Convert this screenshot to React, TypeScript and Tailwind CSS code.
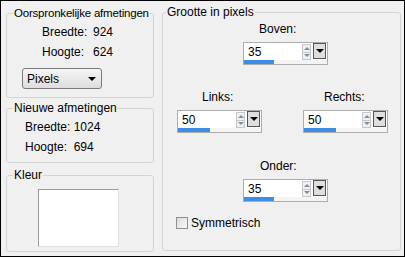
import React from "react";

const font = { fontFamily: '"Liberation Sans", Arial, sans-serif' };

function Spin({ value, fill }: { value: string; fill: number }) {
  return (
    <div className="w-[85px] h-[23px] border border-[#adadad] bg-white flex flex-col">
      <div className="flex h-[18px] items-start">
        <div className="flex-1 pl-[4px] pt-[2px] text-[12px] leading-[14px] text-black">{value}</div>
        <div className="w-[9px] h-[16px] mt-[1px] flex flex-col border border-[#c8c8c8] bg-[#f0f0f0]">
          <div className="flex-1 flex items-center justify-center">
            <div className="w-0 h-0 border-l-[3px] border-r-[3px] border-b-[3px] border-l-transparent border-r-transparent border-b-[#7d8fa3]" />
          </div>
          <div className="h-px bg-[#c8c8c8]" />
          <div className="flex-1 flex items-center justify-center">
            <div className="w-0 h-0 border-l-[3px] border-r-[3px] border-t-[3px] border-l-transparent border-r-transparent border-t-[#7d8fa3]" />
          </div>
        </div>
        <div className="w-[13px] h-[16px] ml-[2px] mr-[1px] border border-[#555] bg-[#dedede] flex items-center justify-center">
          <div className="w-0 h-0 border-l-[4px] border-r-[4px] border-t-[4px] border-l-transparent border-r-transparent border-t-black" />
        </div>
      </div>
      <div className="h-[4px] mt-auto bg-[#f4f4f4]">
        <div className="h-full bg-[#3b8ee3]" style={{ width: fill }} />
      </div>
    </div>
  );
}

export default function App() {
  return (
    <div
      className="w-[405px] h-[257px] border border-black bg-[#f0f0f0] flex pt-[4px] pl-[5px] text-[12px] leading-[14px] text-black"
      style={font}
    >
      {/* Left column */}
      <div className="w-[148px] flex flex-col">
        <fieldset className="h-[92px] mt-[1px] border border-[#d4d4d4] rounded-[3px]">
          <legend className="ml-[6px] px-[1px] whitespace-nowrap text-[11.5px] tracking-[-0.2px]">Oorspronkelijke afmetingen</legend>
          <div className="grid grid-cols-[51px_auto] ml-[35px] mt-[5px] gap-y-[6px]">
            <span>Breedte:</span>
            <span>924</span>
            <span>Hoogte:</span>
            <span>624</span>
          </div>
          <div className="ml-[15px] mt-[9px] w-[80px] h-[21px] border border-[#7a7a7a] rounded-[3px] bg-gradient-to-b from-[#f6f6f6] to-[#dddddd] flex items-center pl-[4px] pr-[5px]">
            <span className="flex-1">Pixels</span>
            <div className="w-0 h-0 border-l-[4px] border-r-[4px] border-t-[4px] border-l-transparent border-r-transparent border-t-black" />
          </div>
        </fieldset>

        <fieldset className="h-[62px] mt-[3px] border border-[#d4d4d4] rounded-[3px]">
          <legend className="ml-[6px] px-[1px]">Nieuwe afmetingen</legend>
          <div className="ml-[18px] mt-[5px] flex flex-col gap-[6px] whitespace-pre">
            <span>Breedte: 1024</span>
            <span>Hoogte:  694</span>
          </div>
        </fieldset>

        <fieldset className="h-[84px] mt-[5px] border border-[#d4d4d4] rounded-[3px]">
          <legend className="ml-[6px] px-[1px]">Kleur</legend>
          <div className="ml-[31px] mt-[7px] w-[81px] h-[58px] bg-white border-t border-l border-[#9a9a9a] border-r border-b border-r-[#e0e0e0] border-b-[#e0e0e0]" />
        </fieldset>
      </div>

      {/* Right column */}
      <fieldset className="w-[239px] h-[246px] ml-[8px] border border-[#d4d4d4] rounded-[3px]">
        <legend className="ml-[3px] px-[1px]">Grootte in pixels</legend>
        <div className="flex flex-col">
          <div className="ml-[96px] mt-[3px]">Boven:</div>
          <div className="ml-[80px] mt-[6px]">
            <Spin value="35" fill={30} />
          </div>

          <div className="flex mt-[25px]">
            <div className="flex flex-col ml-[14px]">
              <div className="ml-[25px]">Links:</div>
              <div className="mt-[6px]">
                <Spin value="50" fill={32} />
              </div>
            </div>
            <div className="flex flex-col ml-[41px]">
              <div className="ml-[21px]">Rechts:</div>
              <div className="mt-[6px]">
                <Spin value="50" fill={32} />
              </div>
            </div>
          </div>

          <div className="ml-[97px] mt-[26px]">Onder:</div>
          <div className="ml-[80px] mt-[6px]">
            <Spin value="35" fill={30} />
          </div>

          <div className="flex items-center ml-[13px] mt-[14px] gap-[3px]">
            <div className="w-[12px] h-[12px] border border-[#8e8f8f] bg-gradient-to-br from-[#dcdcdc] to-[#f8f8f8]" />
            <span>Symmetrisch</span>
          </div>
        </div>
      </fieldset>
    </div>
  );
}
